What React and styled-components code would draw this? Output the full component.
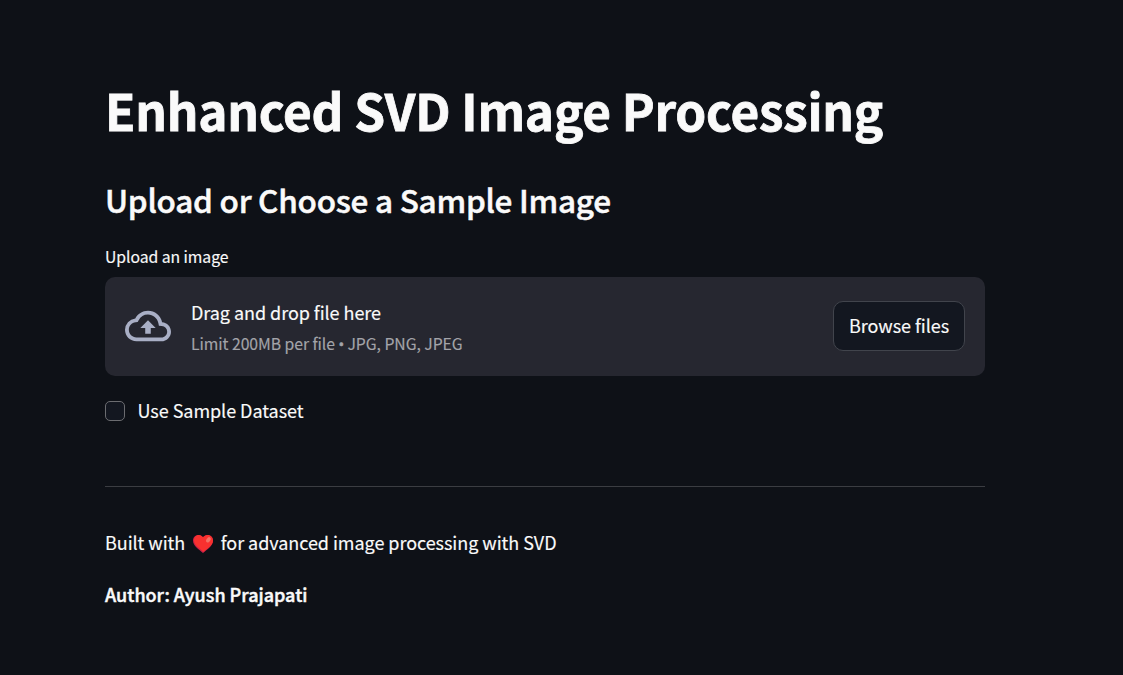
import React from 'react';
import styled, { createGlobalStyle } from 'styled-components';

const GlobalStyle = createGlobalStyle`
  * { box-sizing: border-box; }
  body {
    margin: 0;
    background: #0e1117;
    color: #fafafa;
    font-family: "Noto Sans CJK SC", sans-serif;
    letter-spacing: -0.05px;
    -webkit-text-stroke: 0.15px currentColor;
  }
`;

const Page = styled.main`
  display: flex;
  flex-direction: column;
  width: 985px;
  height: 675px;
  padding: 77px 0 0 105px;
`;

const Title = styled.h1`
  margin: 0;
  font-size: 49.5px;
  line-height: 66px;
  font-weight: 700;
  letter-spacing: -0.24px;
  white-space: nowrap;
  -webkit-text-stroke: 0.8px #fafafa;
`;

const Heading = styled.h2`
  margin: 35px 0 0;
  font-size: 31.5px;
  line-height: 43px;
  font-weight: 500;
  letter-spacing: -0.25px;
  white-space: nowrap;
  -webkit-text-stroke: 0.5px #fafafa;
`;

const Label = styled.label`
  margin-top: 23px;
  font-size: 15.75px;
  line-height: 26px;
`;

const Dropzone = styled.section`
  display: flex;
  align-items: center;
  height: 99px;
  margin-top: 7px;
  padding: 0 20px 1px;
  border-radius: 10px;
  background: #262730;
`;

const CloudIcon = styled.svg`
  width: 46px;
  height: 46px;
  margin-right: 20px;
  fill: #a9afc5;
`;

const Instructions = styled.div`
  display: flex;
  flex-direction: column;
  flex: 1;
`;

const Prompt = styled.span`
  font-size: 18px;
  line-height: 32px;
`;

const Limit = styled.small`
  margin: 1px 0 -1px;
  font-size: 15.75px;
  line-height: 29px;
  color: #a3a4a9;
`;

const Bullet = styled.span`
  font-family: "Open Sans", sans-serif;
  font-size: 15px;
  line-height: 1;
  -webkit-text-stroke: 0.6px currentColor;
`;

const Button = styled.button`
  width: 132px;
  height: 50px;
  padding: 0 0 2px;
  border: 1px solid #41444c;
  border-radius: 10px;
  background: #131720;
  color: #fafafa;
  font: 400 18px/32px "Noto Sans CJK SC", sans-serif;
  letter-spacing: -0.05px;
`;

const CheckRow = styled.label`
  display: flex;
  align-items: center;
  gap: 12.5px;
  height: 32px;
  margin-top: 19px;
  font-size: 18px;
`;

const CheckText = styled.span`
  padding-bottom: 2px;
`;

const CheckBox = styled.span`
  width: 20px;
  height: 20px;
  border: 1px solid #6b6c70;
  border-radius: 5px;
  background: #131720;
`;

const Divider = styled.hr`
  width: 100%;
  height: 1px;
  margin: 59px 0 0;
  border: 0;
  background: #3b3d42;
`;

const Credit = styled.p`
  display: flex;
  align-items: center;
  margin: 39px 0 0;
  font-size: 18px;
  line-height: 32px;
`;

const Heart = styled.svg`
  width: 20px;
  height: 18px;
  margin: 3px 7.5px 0 8px;
`;

const Author = styled.p`
  margin: 20px 0 0;
  font-size: 18px;
  line-height: 32px;
  font-weight: 500;
  letter-spacing: 0;
  -webkit-text-stroke: 0.45px #fafafa;
`;

export default function App() {
  return (
    <>
      <GlobalStyle />
      <Page>
        <Title>Enhanced SVD Image Processing</Title>
        <Heading>Upload or Choose a Sample Image</Heading>
        <Label>Upload an image</Label>
        <Dropzone>
          <CloudIcon viewBox="0 0 24 24" aria-hidden="true">
            <path d="M19.35 10.04A7.49 7.49 0 0 0 12 4C9.11 4 6.6 5.64 5.35 8.04A5.994 5.994 0 0 0 0 14c0 3.31 2.69 6 6 6h13c2.76 0 5-2.24 5-5 0-2.64-2.05-4.78-4.65-4.96zM19 18H6c-2.21 0-4-1.79-4-4 0-2.05 1.53-3.76 3.56-3.97l1.07-.11.5-.95A5.469 5.469 0 0 1 12 6c2.62 0 4.88 1.86 5.39 4.43l.3 1.5 1.53.11A2.98 2.98 0 0 1 22 15c0 1.65-1.35 3-3 3zM8 13h2.55v3h2.9v-3H16l-4-4z" />
          </CloudIcon>
          <Instructions>
            <Prompt>Drag and drop file here</Prompt>
            <Limit>Limit 200MB per file <Bullet>•</Bullet> JPG, PNG, JPEG</Limit>
          </Instructions>
          <Button>Browse files</Button>
        </Dropzone>
        <CheckRow>
          <CheckBox />
          <CheckText>Use Sample Dataset</CheckText>
        </CheckRow>
        <Divider />
        <Credit>
          Built with
          <Heart viewBox="0 0 20 18" aria-label="heart">
            <path fill="#ca2049" d="M5.500 0C2 0 0 2.500 0 5.600c0 5.400 6 9.200 10 12.400 4-3.200 10-7 10-12.400C20 2.500 18 0 14.500 0 12.500 0 11 1 10 2.300 9 1 7.500 0 5.500 0z" />
            <path fill="#f8312f" d="M6 0C3 0 1 2.300 1 5.200c0 5 5.800 8.300 9.500 11.500C14.500 13.500 20 10.500 20 5.600 20 2.500 18 0 14.500 0 12.500 0 11 1 10 2.300 9 1 7.800 0 6 0z" />
            <ellipse cx="15.400" cy="4.800" rx="1.900" ry="2.900" transform="rotate(35 15.400 4.800)" fill="#f37366" />
          </Heart>
          for advanced image processing with SVD
        </Credit>
        <Author>Author: Ayush Prajapati</Author>
      </Page>
    </>
  );
}
